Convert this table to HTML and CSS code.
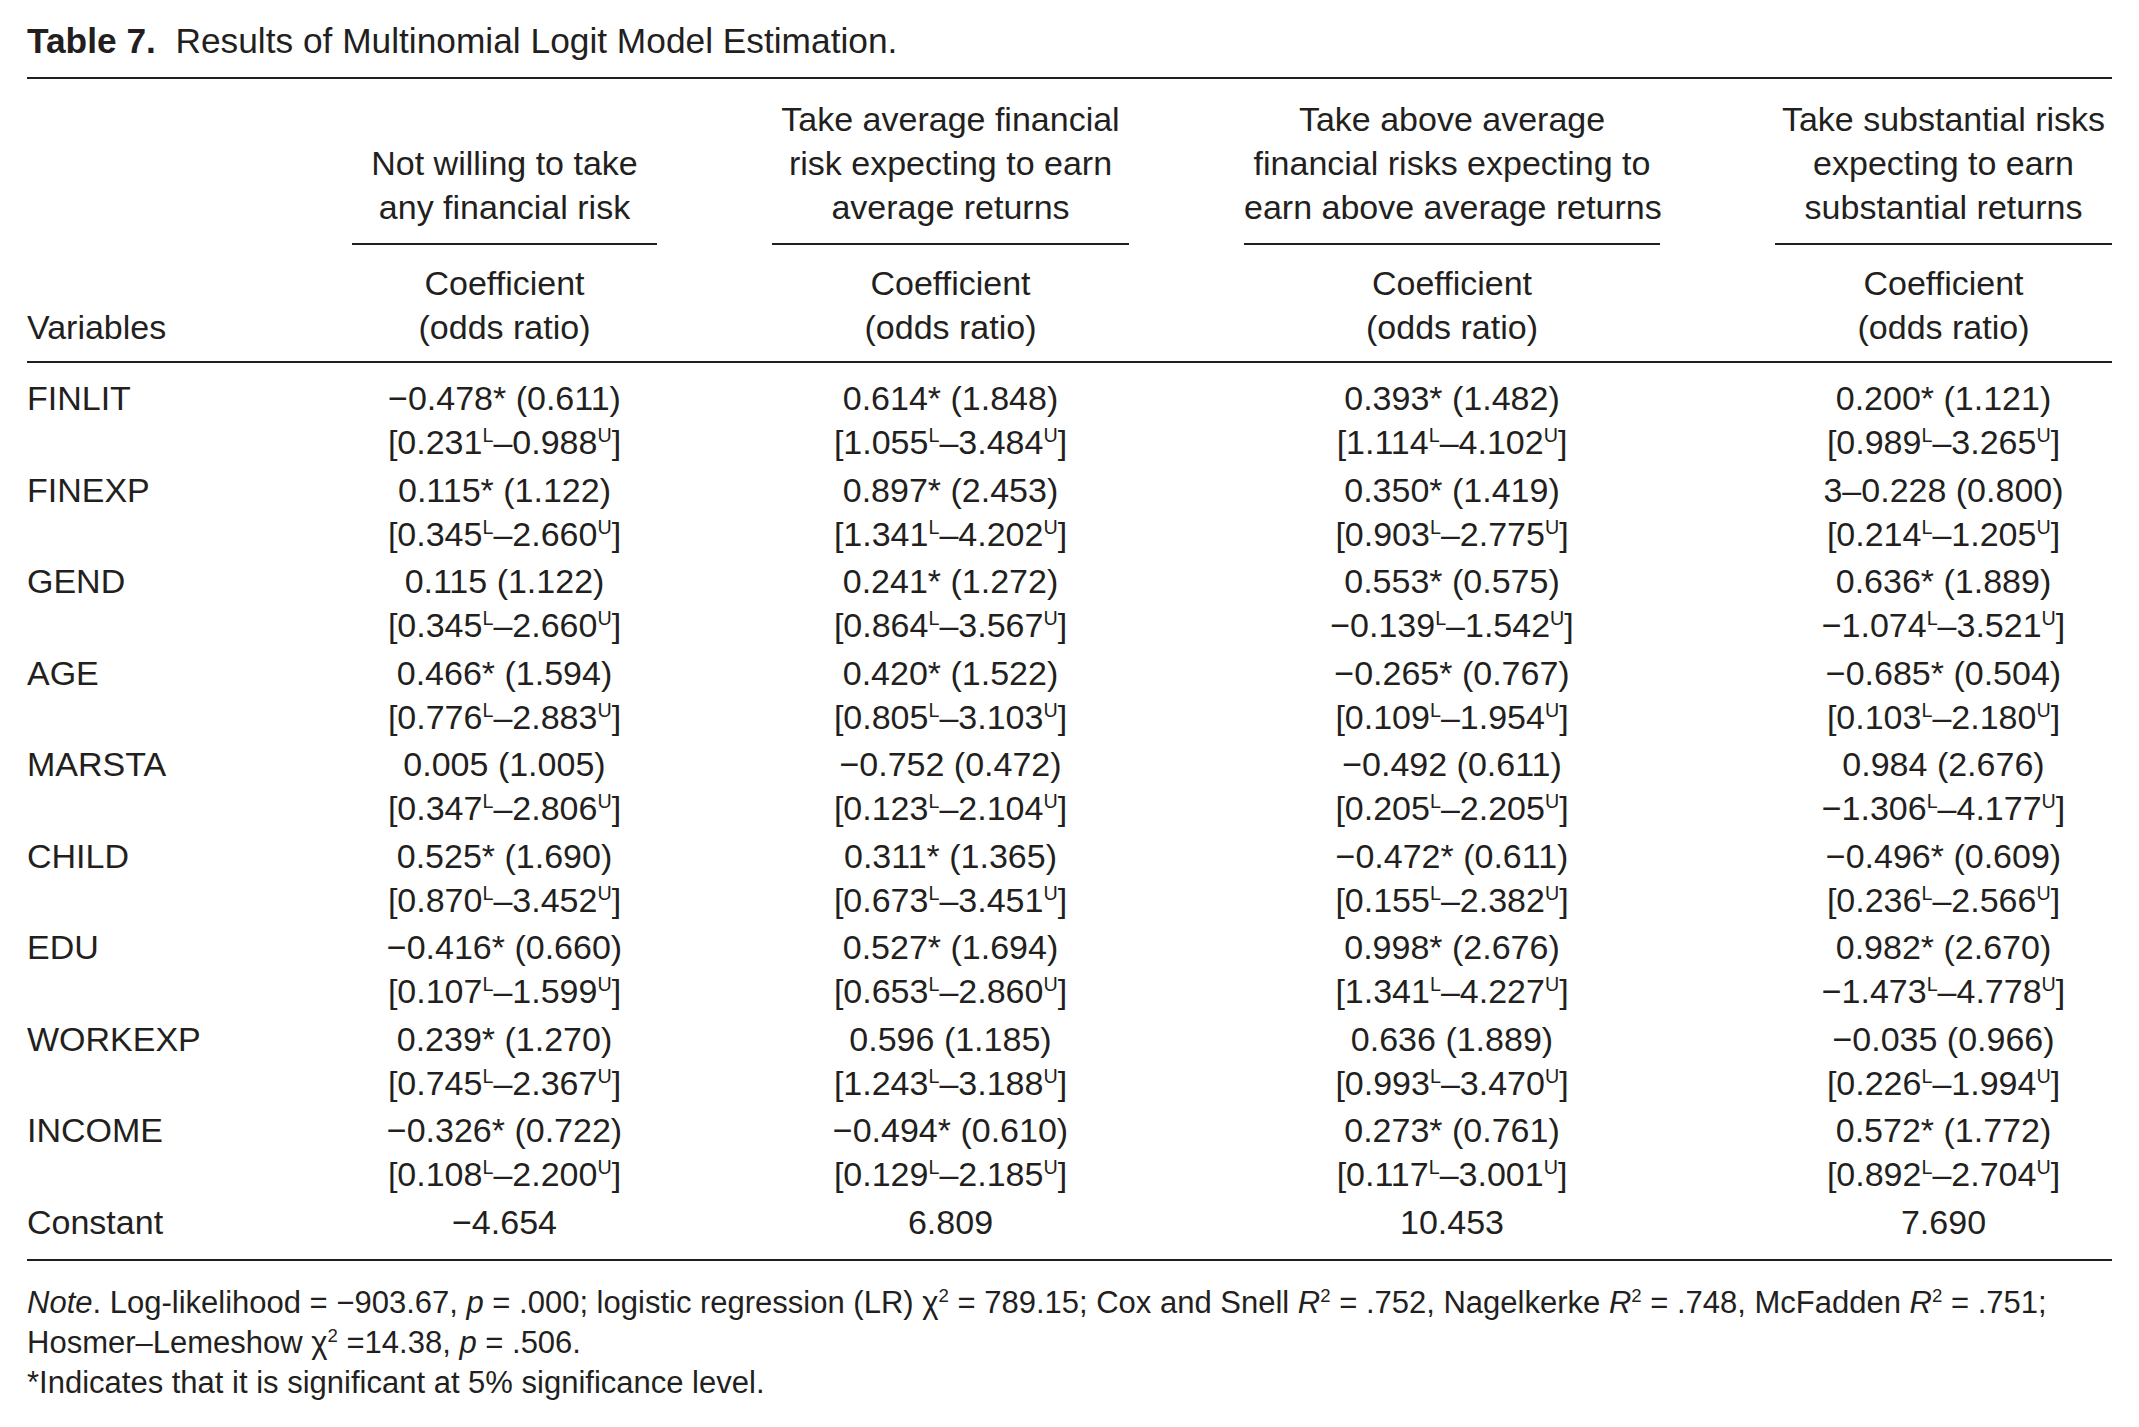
FILE: index.html
```html
<!DOCTYPE html>
<html lang="en">
<head>
<meta charset="utf-8">
<title>Table 7</title>
<link rel="stylesheet" href="styles.css">
</head>
<body>
<div class="page">
  <div class="title"><b>Table 7.</b>&nbsp; Results of Multinomial Logit Model Estimation.</div>
  <div class="tbl">
    <div class="rule full"></div>

    <div class="gh blank"></div>
    <div class="gh">Not willing to take<br>any financial risk</div>
    <div class="gh">Take average financial<br>risk expecting to earn<br>average returns</div>
    <div class="gh">Take above average<br>financial risks expecting to<br>earn above average returns</div>
    <div class="gh">Take substantial risks<br>expecting to earn<br>substantial returns</div>

    <div class="sh var">Variables</div>
    <div class="sh">Coefficient<br>(odds ratio)</div>
    <div class="sh">Coefficient<br>(odds ratio)</div>
    <div class="sh">Coefficient<br>(odds ratio)</div>
    <div class="sh">Coefficient<br>(odds ratio)</div>

    <div class="rule full mid"></div>

    <div class="v">FINLIT</div>
    <div class="c">−0.478* (0.611)<br>[0.231<sup>L</sup>–0.988<sup>U</sup>]</div>
    <div class="c">0.614* (1.848)<br>[1.055<sup>L</sup>–3.484<sup>U</sup>]</div>
    <div class="c">0.393* (1.482)<br>[1.114<sup>L</sup>–4.102<sup>U</sup>]</div>
    <div class="c">0.200* (1.121)<br>[0.989<sup>L</sup>–3.265<sup>U</sup>]</div>

    <div class="v">FINEXP</div>
    <div class="c">0.115* (1.122)<br>[0.345<sup>L</sup>–2.660<sup>U</sup>]</div>
    <div class="c">0.897* (2.453)<br>[1.341<sup>L</sup>–4.202<sup>U</sup>]</div>
    <div class="c">0.350* (1.419)<br>[0.903<sup>L</sup>–2.775<sup>U</sup>]</div>
    <div class="c">3–0.228 (0.800)<br>[0.214<sup>L</sup>–1.205<sup>U</sup>]</div>

    <div class="v">GEND</div>
    <div class="c">0.115 (1.122)<br>[0.345<sup>L</sup>–2.660<sup>U</sup>]</div>
    <div class="c">0.241* (1.272)<br>[0.864<sup>L</sup>–3.567<sup>U</sup>]</div>
    <div class="c">0.553* (0.575)<br>−0.139<sup>L</sup>–1.542<sup>U</sup>]</div>
    <div class="c">0.636* (1.889)<br>−1.074<sup>L</sup>–3.521<sup>U</sup>]</div>

    <div class="v">AGE</div>
    <div class="c">0.466* (1.594)<br>[0.776<sup>L</sup>–2.883<sup>U</sup>]</div>
    <div class="c">0.420* (1.522)<br>[0.805<sup>L</sup>–3.103<sup>U</sup>]</div>
    <div class="c">−0.265* (0.767)<br>[0.109<sup>L</sup>–1.954<sup>U</sup>]</div>
    <div class="c">−0.685* (0.504)<br>[0.103<sup>L</sup>–2.180<sup>U</sup>]</div>

    <div class="v">MARSTA</div>
    <div class="c">0.005 (1.005)<br>[0.347<sup>L</sup>–2.806<sup>U</sup>]</div>
    <div class="c">−0.752 (0.472)<br>[0.123<sup>L</sup>–2.104<sup>U</sup>]</div>
    <div class="c">−0.492 (0.611)<br>[0.205<sup>L</sup>–2.205<sup>U</sup>]</div>
    <div class="c">0.984 (2.676)<br>−1.306<sup>L</sup>–4.177<sup>U</sup>]</div>

    <div class="v">CHILD</div>
    <div class="c">0.525* (1.690)<br>[0.870<sup>L</sup>–3.452<sup>U</sup>]</div>
    <div class="c">0.311* (1.365)<br>[0.673<sup>L</sup>–3.451<sup>U</sup>]</div>
    <div class="c">−0.472* (0.611)<br>[0.155<sup>L</sup>–2.382<sup>U</sup>]</div>
    <div class="c">−0.496* (0.609)<br>[0.236<sup>L</sup>–2.566<sup>U</sup>]</div>

    <div class="v">EDU</div>
    <div class="c">−0.416* (0.660)<br>[0.107<sup>L</sup>–1.599<sup>U</sup>]</div>
    <div class="c">0.527* (1.694)<br>[0.653<sup>L</sup>–2.860<sup>U</sup>]</div>
    <div class="c">0.998* (2.676)<br>[1.341<sup>L</sup>–4.227<sup>U</sup>]</div>
    <div class="c">0.982* (2.670)<br>−1.473<sup>L</sup>–4.778<sup>U</sup>]</div>

    <div class="v">WORKEXP</div>
    <div class="c">0.239* (1.270)<br>[0.745<sup>L</sup>–2.367<sup>U</sup>]</div>
    <div class="c">0.596 (1.185)<br>[1.243<sup>L</sup>–3.188<sup>U</sup>]</div>
    <div class="c">0.636 (1.889)<br>[0.993<sup>L</sup>–3.470<sup>U</sup>]</div>
    <div class="c">−0.035 (0.966)<br>[0.226<sup>L</sup>–1.994<sup>U</sup>]</div>

    <div class="v">INCOME</div>
    <div class="c">−0.326* (0.722)<br>[0.108<sup>L</sup>–2.200<sup>U</sup>]</div>
    <div class="c">−0.494* (0.610)<br>[0.129<sup>L</sup>–2.185<sup>U</sup>]</div>
    <div class="c">0.273* (0.761)<br>[0.117<sup>L</sup>–3.001<sup>U</sup>]</div>
    <div class="c">0.572* (1.772)<br>[0.892<sup>L</sup>–2.704<sup>U</sup>]</div>

    <div class="v">Constant</div>
    <div class="c">−4.654</div>
    <div class="c">6.809</div>
    <div class="c">10.453</div>
    <div class="c">7.690</div>

    <div class="rule full end"></div>
  </div>
  <div class="note">
    <p><i>Note</i>. Log-likelihood = −903.67, <i>p</i> = .000; logistic regression (LR) χ<sup>2</sup> = 789.15; Cox and Snell <i>R</i><sup>2</sup> = .752, Nagelkerke <i>R</i><sup>2</sup> = .748, McFadden <i>R</i><sup>2</sup> = .751;<br>Hosmer–Lemeshow χ<sup>2</sup> =14.38, <i>p</i> = .506.</p>
    <p>*Indicates that it is significant at 5% significance level.</p>
  </div>
</div>
</body>
</html>
```

FILE: styles.css
```css
html, body {
  margin: 0;
  padding: 0;
  background: #ffffff;
}

body {
  font-family: "Liberation Sans", Arial, sans-serif;
  color: #231f20;
}

.page {
  padding: 19px 27px 0 27px;
  width: 2085px;
}

.title {
  font-size: 35.3px;
  line-height: 44px;
  margin-bottom: 14px;
}

.title b {
  font-weight: 700;
}

.tbl {
  display: grid;
  grid-template-columns: 210px 305px 357px 416px 337px;
  column-gap: 115px;
  font-size: 34px;
  line-height: 44px;
}

.rule {
  height: 2px;
  background: #231f20;
}

.rule.full {
  grid-column: 1 / -1;
}

.rule.mid {
  margin-bottom: 13px;
}

.rule.end {
  margin-top: 12px;
}

.gh {
  align-self: end;
  text-align: center;
  white-space: nowrap;
  padding: 18px 0 14px;
  border-bottom: 2px solid #231f20;
}

.gh.blank {
  border-bottom: none;
  align-self: stretch;
}

.sh {
  align-self: end;
  text-align: center;
  white-space: nowrap;
  padding: 16px 0 12px;
}

.sh.var {
  text-align: left;
}

.v {
  text-align: left;
  padding-bottom: 3.5px;
}

.c {
  text-align: center;
  white-space: nowrap;
  padding-bottom: 3.5px;
}

sup {
  font-size: 0.58em;
  line-height: 0;
  vertical-align: 0.62em;
}

.note {
  margin-top: 22px;
  font-size: 31px;
  line-height: 40px;
}

.note p {
  margin: 0;
}

.note sup {
  font-size: 0.6em;
  vertical-align: 0.6em;
}
```
